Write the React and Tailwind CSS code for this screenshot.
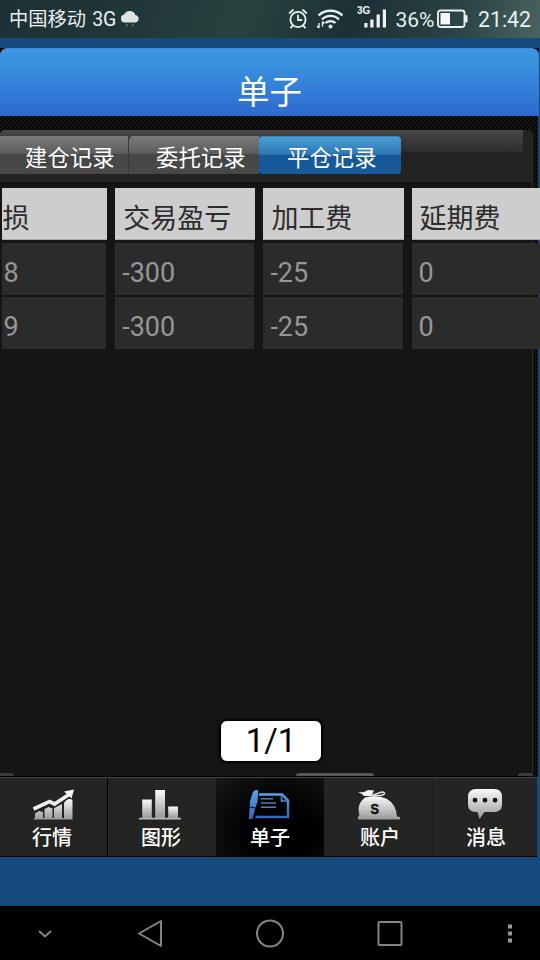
const cjk = 'font-["Roboto","Noto_Sans_CJK_SC",sans-serif]';

function StatusBar() {
  return (
    <header className="flex h-[38px] shrink-0 items-center bg-[linear-gradient(110deg,#1d3033_0%,#213638_25%,#28423f_45%,#1c3034_65%,#2b4445_85%,#496560_100%)] pl-[9px] pr-[9px] text-[20px] leading-[38px] text-[#e9f0f0]">
      <span className="pt-[2px] text-[19.3px]">中国移动</span>
      <span className="ml-[6px] pt-[2px] text-[19.5px]">3G</span>
      <svg className="ml-[4px] h-[20px] w-[20px]" viewBox="0 0 20 20">
        <path d="M4.500 13.500a4 4 0 0 1-.3-7.900A6 6 0 0 1 15.400 6a3.800 3.800 0 0 1 0 7.500z" fill="#dfe3e2" />
        <path d="M6 16.200h1.400M12 16.200h1.400" stroke="#5fa8b4" strokeWidth="1.600" />
      </svg>
      <svg className="ml-[148px] h-[22px] w-[20px] shrink-0" viewBox="0 0 20 22" fill="none" stroke="#e9f0f0" strokeWidth="1.800" strokeLinecap="round">
        <circle cx="10" cy="11.500" r="7.600" />
        <path d="M10 7.500v4.500h3.500M1.600 5 5 2M18.400 5 15 2M4.500 18 3 19.500M15.500 18 17 19.500" />
      </svg>
      <svg className="ml-[8px] h-[22px] w-[28px] shrink-0" viewBox="0 0 28 22" fill="none" stroke="#e9f0f0" strokeWidth="2.300">
        <path d="M2.500 7.500a17.500 17.500 0 0 1 24 0M6 11.500a12 12 0 0 1 17 0M9.500 15a7.500 7.500 0 0 1 10 0" />
        <circle cx="14.500" cy="18.500" r="2" fill="#e9f0f0" stroke="none" />
        <path d="M3 15v5M6.500 13.500v5M1 18l2 2M8.500 15.500l-2-2" strokeWidth="1.400" />
      </svg>
      <svg className="ml-[13px] h-[26px] w-[30px] shrink-0" viewBox="0 0 30 26" fill="#f1f5f5">
        <text x="0" y="8" fontSize="10" fontWeight="700" fontFamily="Liberation Sans, sans-serif">3G</text>
        <path d="M7.300 17h3.200v4.500H7.300zM13.300 13.500h3.200v8h-3.200zM19.600 8.500h3.200v13h-3.200zM25.800 3.500H29v18h-3.200z" />
      </svg>
      <span className="ml-[8px] w-[41px] shrink-0 pt-[2px] text-[21px]">36%</span>
      <svg className="ml-[1px] h-[20px] w-[31px] shrink-0" viewBox="0 0 31 20">
        <rect x="1" y="1.500" width="26.500" height="16.500" rx="2.500" fill="none" stroke="#e9f0f0" strokeWidth="1.900" />
        <rect x="3.500" y="4" width="9.500" height="11.500" fill="#f5f8f8" />
        <rect x="28" y="6" width="2.500" height="7.500" rx="1" fill="#e9f0f0" />
      </svg>
      <span className="ml-auto pt-[2px] text-[21.3px]">21:42</span>
    </header>
  );
}

const columns = [
  { title: '损', rows: ['8', '9'], box: 'w-[105.6px]', pad: 'pl-[1px]', cell: 'pl-[2px]' },
  { title: '交易盈亏', rows: ['-300', '-300'], box: 'w-[140.2px]', pad: 'pl-[8px]', cell: 'pl-[7px]' },
  { title: '加工费', rows: ['-25', '-25'], box: 'w-[140.2px]', pad: 'pl-[8px]', cell: 'pl-[7px]' },
  { title: '延期费', rows: ['0', '0'], box: 'w-[129px]', pad: 'pl-[8px]', cell: 'pl-[7px]' },
];

function Table() {
  return (
    <div className="flex gap-[8px] pl-[1.6px] pt-[6px]">
      {columns.map((c) => (
        <div key={c.title} className={`flex shrink-0 flex-col ${c.box}`}>
          <div className={`mb-[3px] h-[52px] border-b border-[#aaa] bg-[#cdcdcd] text-[27px] leading-[62px] text-[#2c2c2c] ${c.pad}`}>{c.title}</div>
          {c.rows.map((v, i) => (
            <div key={i} className={`mb-[2px] mr-px h-[52px] bg-[#2b2b2b] text-[27px] leading-[61px] text-[#969696] ${c.cell}`}>{v}</div>
          ))}
        </div>
      ))}
    </div>
  );
}

function Tabs() {
  const grey = 'bg-[linear-gradient(#7b7b7b_0%,#5a5a5a_47%,#464646_48%,#484848_100%)]';
  return (
    <div className="h-[52px] rounded-t-[5px] bg-[#232323]">
      <div className="h-[22px] w-[523px] rounded-tl-[5px] border-t border-[#4c4c4c] bg-[linear-gradient(#454545,#2d2d2d)]">
        <div className="flex pt-[5px] text-[22.4px] leading-[44px] text-white">
          <div className={`h-[38px] w-[128px] shrink-0 pl-[25px] ${grey}`}>建仓记录</div>
          <div className={`h-[38px] w-[131px] shrink-0 rounded-tl-[5px] border-l border-[#3a3a3a] pl-[27px] ${grey}`}>委托记录</div>
          <div className="h-[38px] w-[142px] shrink-0 rounded-[4px] border-t border-[#3f82b5] bg-[linear-gradient(#4a9ed5_0%,#2d78b2_47%,#165896_48%,#185b9b_100%)] pl-[28px] leading-[42px]">平仓记录</div>
        </div>
      </div>
    </div>
  );
}

function Defs() {
  return (
    <svg className="absolute h-0 w-0">
      <defs>
        <linearGradient id="silver" x1="0" y1="0" x2="0" y2="1">
          <stop offset="0" stopColor="#fafafa" />
          <stop offset="1" stopColor="#999" />
        </linearGradient>
        <linearGradient id="azure" x1="0" y1="0" x2="0" y2="1">
          <stop offset="0" stopColor="#55a5ef" />
          <stop offset="1" stopColor="#3466bd" />
        </linearGradient>
      </defs>
    </svg>
  );
}

const icons = {
  quotes: (
    <g>
      <path fill="url(#silver)" d="M3 24.500l4-2.500 4 1V30H3zM12.500 20l4-2 4 1.500V30h-8zM22 19l8-4v15h-8zM32 14q4-6 8.500-3v19H32zM2 29h38.500v1.500H2z" />
      <path fill="none" stroke="#1c1c1c" strokeWidth="5.500" d="M1.500 20 17.500 13l5 2.500L36 6" />
      <path fill="none" stroke="#eee" strokeWidth="3.800" d="M1.500 20 17.500 12.500l5 2.500L37 5.500" />
      <path fill="#f4f4f4" d="M32 2.500l10-2-2.500 9z" />
    </g>
  ),
  chart: (
    <g>
      <path fill="url(#silver)" d="M3.200 10.500h9.600v18.500H3.200z" />
      <path fill="url(#silver)" d="M16.200 1h9.800v28h-9.800z" />
      <path fill="url(#silver)" d="M29.200 17.500h9.800V29h-9.800z" />
      <path fill="#b8b8b8" d="M0 28.800h42v1.700H0z" />
    </g>
  ),
  orders: (
    <g>
      <path fill="none" stroke="url(#azure)" strokeWidth="2.400" d="M11 5.500h23l6 6v16.500H7.500" />
      <path fill="none" stroke="#4188d8" strokeWidth="1.700" d="M33.500 5.500V12h6" />
      <path fill="none" stroke="#5480b4" strokeWidth="1.500" d="M13 9.800h12M13 14h15M13 18.200h15" />
      <path fill="url(#azure)" d="M5 3Q7.500 0 10.200 1.500L9.500 13 7 20l-2.500 10H1L2 12z" />
      <path stroke="#111" strokeWidth="1.200" d="M1.500 18l6.500 1.200" />
    </g>
  ),
  account: (
    <g>
      <path fill="#f4f4f4" d="M1 3.500l6-.5 4-2 6 .500-2.500 5.500H7L5 5z" />
      <path fill="none" stroke="#ddd" strokeWidth="1.600" d="M15 6.500l8-3q4.500-1 4.500.800t-5 2.200l-8 .5" />
      <path fill="url(#silver)" d="M8 8.500q13-3 22 1.500 9 5 10 17.500l3 .5v2.500H1V28l1.500-2Q-1 15.500 8 8.500z" />
      <text x="13.500" y="25" fontSize="15" fontWeight="800" fill="#111" fontFamily="Liberation Sans, sans-serif" stroke="#111" strokeWidth=".5" textLength="8.500" lengthAdjust="spacingAndGlyphs">S</text>
    </g>
  ),
  message: (
    <g>
      <path fill="url(#silver)" d="M9 0h18q8 0 8 8v7.500q0 7.500-8 7.500h-9.500l-5 7-2-7H9q-8 0-8-7.500V8q0-8 8-8z" />
      <path stroke="#111" strokeWidth="4.800" strokeLinecap="round" d="M8 11.200h.01M18 11.200h.01M28 11.200h.01" />
    </g>
  ),
};

const nav = [
  { label: '行情', icon: 'quotes', box: 'w-[108px] border-r border-black pl-[32px]' },
  { label: '图形', icon: 'chart', box: 'w-[108px] pl-[31px]', text: 'pl-[2px]' },
  { label: '单子', icon: 'orders', box: 'w-[108px] bg-[radial-gradient(ellipse_at_60%_70%,#000_35%,#0c0c0c_70%,#1a1a1a_100%)] pl-[32px]', text: 'pl-[2px]' },
  { label: '账户', icon: 'account', box: 'w-[108px] pl-[33px]', text: 'pl-[3px]' },
  { label: '消息', icon: 'message', box: 'w-[105px] border-l border-[#1c1c1c] pl-[34px]', text: '-ml-[1px]' },
];

function BottomNav() {
  return (
    <nav className="flex h-[80px] w-[537px] shrink-0 border-b border-t border-b-black border-t-[#454545] bg-[#242423] text-[20px] font-medium text-white">
      {nav.map((n) => (
        <div key={n.icon} className={`flex shrink-0 flex-col pt-[11px] ${n.box}`}>
          <svg className="h-[32px] w-[44px]" viewBox="0 0 44 32">{icons[n.icon]}</svg>
          <span className={`leading-[35px] ${n.text || ''}`}>{n.label}</span>
        </div>
      ))}
    </nav>
  );
}

function SystemKeys() {
  return (
    <footer className="flex h-[54px] shrink-0 items-center bg-black">
      <svg className="h-[54px] w-[540px]" viewBox="0 0 540 54" fill="none" stroke="#858585" strokeWidth="2">
        <path d="M39 25 45 30.500 51 25" />
        <path d="M139 27.500 161 15v25z" strokeLinejoin="round" />
        <circle cx="270" cy="27.500" r="13" />
        <rect x="378.500" y="16" width="23" height="23" rx="1" />
        <path fill="#999" stroke="none" d="M508 18.500h4v4h-4zM508 25.500h4v4h-4zM508 32.500h4v4h-4z" />
      </svg>
    </footer>
  );
}

export default function App() {
  return (
    <div className={`flex h-[960px] w-[540px] flex-col overflow-hidden bg-[#174a7c] ${cjk}`}>
      <Defs />
      <StatusBar />
      <div className="mt-[10px] h-[68px] w-[539px] shrink-0 bg-black">
        <h1 className="h-[68px] rounded-t-[7px] border-t border-[#4284d5] bg-[linear-gradient(#3b97e1_0%,#3990dd_25%,#2d69d0_100%)] text-center text-[32.5px] font-normal leading-[88px] text-white">单子</h1>
      </div>
      <main className="flex h-[661px] w-[538px] shrink-0 flex-col bg-[#0b0b0c] bg-[repeating-conic-gradient(#080808_0_25%,#151515_0_50%)] bg-[length:4px_4px] pt-[14px]">
        <section className="flex h-[647px] w-[533px] flex-col rounded-t-[5px] border-r border-[#322d29] bg-[#151515]">
          <Tabs />
          <Table />
          <div className="mt-auto flex flex-col">
            <div className="ml-[220px] h-[42px] w-[102px] rounded-[7px] border border-black bg-white text-center text-[33px] font-normal leading-[40px] text-black shadow-[0_0_2px_1px_#000]">1/1</div>
            <div className="mt-[11px] flex h-[4px] items-end border-b border-black">
              <div className="h-[3px] w-[14px] rounded-tr-[6px] bg-[#3c3c3c]" />
              <div className="ml-[282px] h-[3px] w-[78px] rounded-t-[5px] bg-[#555559]" />
              <div className="ml-auto h-[3px] w-[14px] rounded-tl-[6px] bg-[#3c3c3c]" />
            </div>
          </div>
        </section>
      </main>
      <BottomNav />
      <div className="grow" />
      <SystemKeys />
    </div>
  );
}
